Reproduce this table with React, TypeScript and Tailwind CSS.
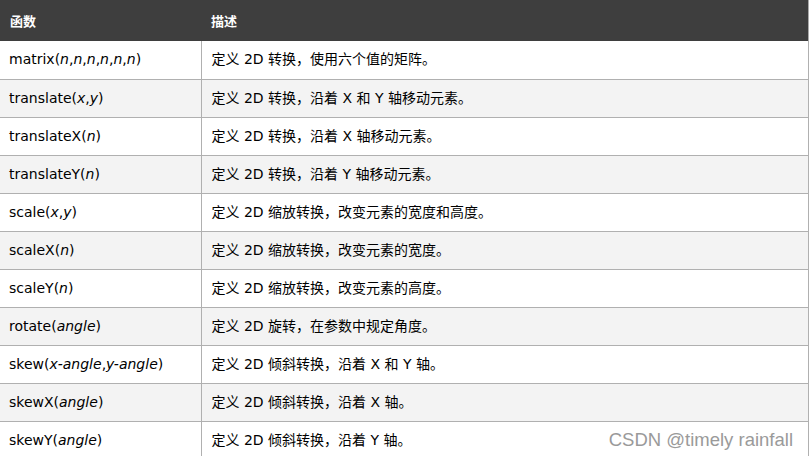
import React from 'react';

type Row = { fn: React.ReactNode; desc: string };

const I: React.FC<{ children: React.ReactNode }> = ({ children }) => <i>{children}</i>;

const rows: Row[] = [
  { fn: <>matrix(<I>n</I>,<I>n</I>,<I>n</I>,<I>n</I>,<I>n</I>,<I>n</I>)</>, desc: '定义 2D 转换，使用六个值的矩阵。' },
  { fn: <>translate(<I>x</I>,<I>y</I>)</>, desc: '定义 2D 转换，沿着 X 和 Y 轴移动元素。' },
  { fn: <>translateX(<I>n</I>)</>, desc: '定义 2D 转换，沿着 X 轴移动元素。' },
  { fn: <>translateY(<I>n</I>)</>, desc: '定义 2D 转换，沿着 Y 轴移动元素。' },
  { fn: <>scale(<I>x</I>,<I>y</I>)</>, desc: '定义 2D 缩放转换，改变元素的宽度和高度。' },
  { fn: <>scaleX(<I>n</I>)</>, desc: '定义 2D 缩放转换，改变元素的宽度。' },
  { fn: <>scaleY(<I>n</I>)</>, desc: '定义 2D 缩放转换，改变元素的高度。' },
  { fn: <>rotate(<I>angle</I>)</>, desc: '定义 2D 旋转，在参数中规定角度。' },
  { fn: <>skew(<I>x-angle</I>,<I>y-angle</I>)</>, desc: '定义 2D 倾斜转换，沿着 X 和 Y 轴。' },
  { fn: <>skewX(<I>angle</I>)</>, desc: '定义 2D 倾斜转换，沿着 X 轴。' },
  { fn: <>skewY(<I>angle</I>)</>, desc: '定义 2D 倾斜转换，沿着 Y 轴。' },
];

export default function App() {
  return (
    <div className="relative w-[811px] h-[456px] overflow-hidden bg-white font-['Verdana','DejaVu_Sans','Noto_Sans_CJK_SC',sans-serif]">
      <table className="w-[809px] border-collapse text-black">
        <thead>
          <tr className="bg-[#3e3e3e] h-[41px]">
            <th className="w-[201px] px-[10px] text-left text-[13px] font-bold text-white font-['Noto_Sans_CJK_SC',sans-serif]">函数</th>
            <th className="px-[10px] text-left text-[13px] font-bold text-white font-['Noto_Sans_CJK_SC',sans-serif] border-r border-[#aaaaaa]">描述</th>
          </tr>
        </thead>
        <tbody>
          {rows.map((r, i) => (
            <tr key={i} className={`h-[38px] border-b border-[#b0b0b0] ${i % 2 === 1 ? 'bg-[#f3f3f3]' : 'bg-white'}`}>
              <td className="px-[9px] text-[14px] border-r border-[#b0b0b0] whitespace-nowrap">{r.fn}</td>
              <td className="px-[10px] text-[14px] border-r border-[#b0b0b0] whitespace-nowrap font-['DejaVu_Sans','Noto_Sans_CJK_SC',sans-serif]">{r.desc}</td>
            </tr>
          ))}
        </tbody>
      </table>
      <div className="absolute right-[18px] bottom-[7px] text-[18.5px] leading-none text-[#9a9a9a] font-['Liberation_Sans',sans-serif]">
        CSDN @timely rainfall
      </div>
    </div>
  );
}
